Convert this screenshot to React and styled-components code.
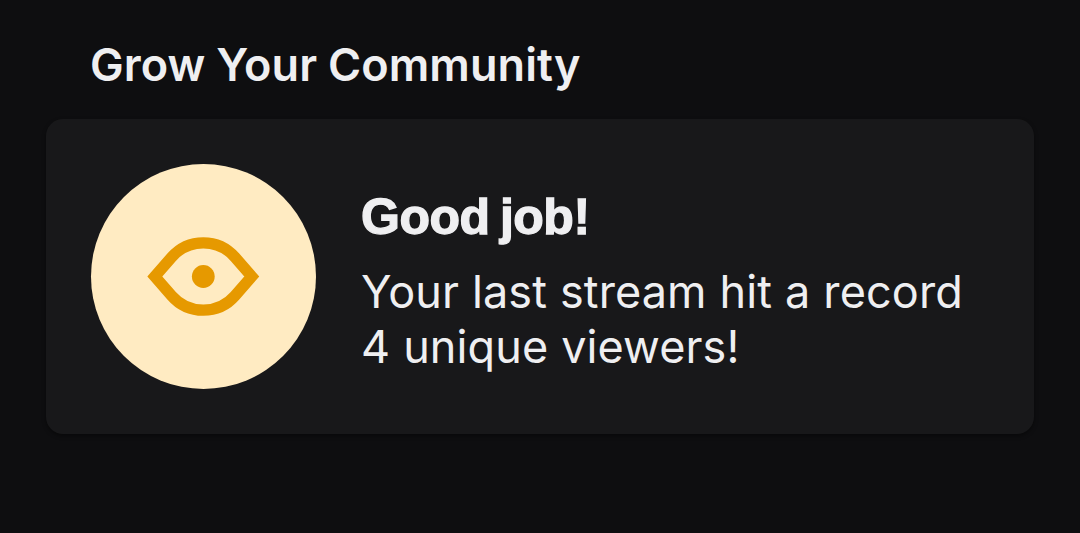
import React from "react";
import styled, { createGlobalStyle } from "styled-components";

const GlobalStyle = createGlobalStyle`
  * { box-sizing: border-box; }
  body { margin: 0; background: #0e0e10; }
`;

const Page = styled.main`
  height: 533px;
  padding: 38px 46px 0;
  background: #0e0e10;
  color: #efeff1;
  font-family: Inter, "Liberation Sans", sans-serif;
`;

const SectionTitle = styled.h2`
  margin: 0 0 27px;
  padding-left: 44px;
  font-size: 45px;
  line-height: 54px;
  font-weight: 600;
  letter-spacing: 0.08px;
  word-spacing: -0.5px;
  white-space: nowrap;
`;

const Card = styled.section`
  display: flex;
  align-items: center;
  gap: 45px;
  height: 315px;
  padding: 45px;
  border-radius: 17px;
  background: #18181a;
  box-shadow: 0 2px 4px rgba(0, 0, 0, 0.4);
`;

const IconCircle = styled.div`
  display: grid;
  place-items: center;
  flex: none;
  width: 225px;
  height: 225px;
  border-radius: 50%;
  background: #ffebc2;
`;

const EyeIcon = styled.svg`
  display: block;
  width: 113px;
  height: 79px;
`;

const Message = styled.div`
  display: flex;
  flex-direction: column;
  gap: 17px;
  padding-top: 7px;
`;

const Headline = styled.h3`
  margin: 0;
  font-family: "Liberation Sans", Arial, sans-serif;
  font-size: 50px;
  line-height: 60px;
  font-weight: 700;
  letter-spacing: -0.5px;
  word-spacing: -3px;
  -webkit-text-stroke: 1.3px currentColor;
  white-space: nowrap;
`;

const Body = styled.p`
  margin: 0;
  font-size: 45px;
  line-height: 55px;
  font-weight: 400;
  letter-spacing: 0.1px;
  word-spacing: 0.2px;
  white-space: nowrap;
`;

export default function App() {
  return (
    <Page>
      <GlobalStyle />
      <SectionTitle>Grow Your Community</SectionTitle>
      <Card>
        <IconCircle>
          <EyeIcon viewBox="0 0 113 79">
            <path
              fill="none"
              stroke="#e69900"
              strokeWidth="11.25"
              strokeLinejoin="miter"
              d="M7.8 39.5 L24.6 20.2 A42 42 0 0 1 88 20.2 L104.8 39.5 L88 58.8 A42 42 0 0 1 24.6 58.8 Z"
            />
            <circle cx="56.3" cy="39.5" r="11.4" fill="#e69900" />
          </EyeIcon>
        </IconCircle>
        <Message>
          <Headline>Good job!</Headline>
          <Body>
            Your last stream hit a record
            <br />4 unique viewers!
          </Body>
        </Message>
      </Card>
    </Page>
  );
}
